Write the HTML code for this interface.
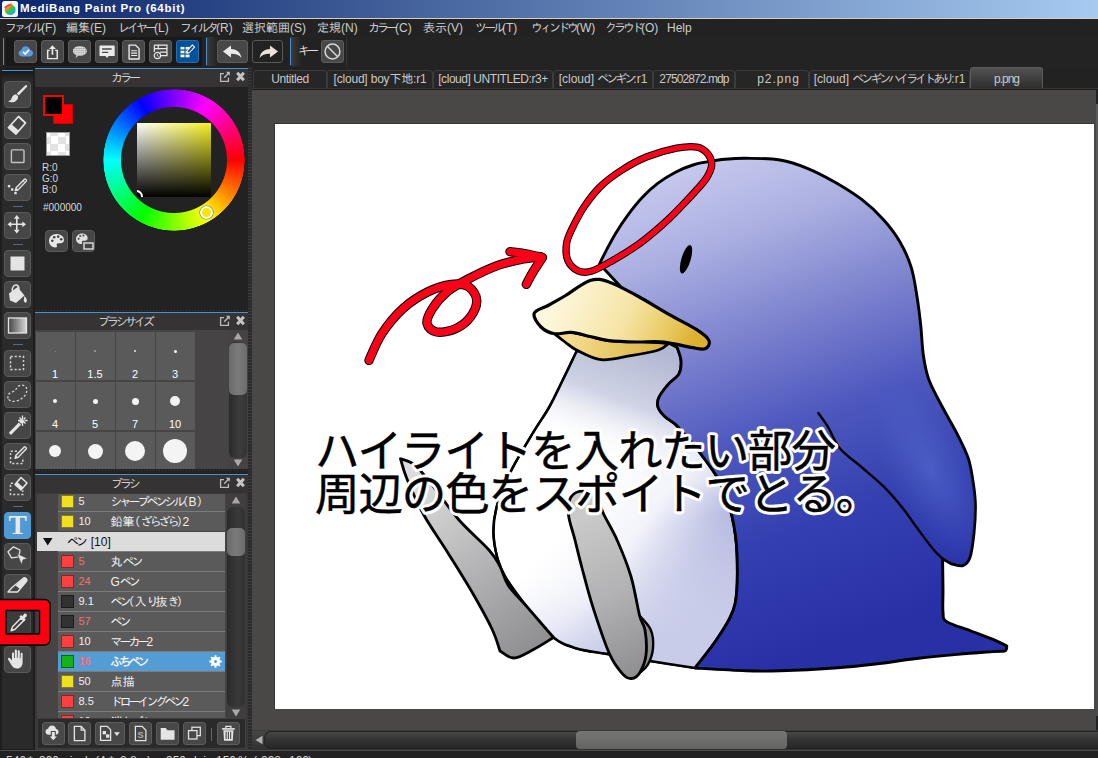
<!DOCTYPE html>
<html lang="ja"><head><meta charset="utf-8"><title>MediBang Paint Pro</title>
<style>
*{box-sizing:border-box;margin:0;padding:0}
html,body{width:1098px;height:758px;overflow:hidden;background:#222}
body{font-family:"Liberation Sans","IPAGothic","Noto Sans CJK JP",sans-serif;font-size:12px;color:#ccc;position:relative}
#app div,#app svg{position:absolute}
.k{letter-spacing:-3px}
.pl{margin-left:-6px}.pr{letter-spacing:-6px}
#app{position:relative;width:1098px;height:758px;overflow:hidden;background:#222}
.t{white-space:nowrap;line-height:1}
.btn{background:#464646;border:1px solid #5a5a5a;border-radius:4px}
.tb{top:40px;height:23px;width:23px;background:#484848;border:1px solid #5c5c5c;border-radius:3px}
.tool{left:4px;width:27px;height:27px;background:#464646;border:1px solid #595959;border-radius:4px}
.tsep{left:13px;width:10px;height:1px;background:#5a6a7a}
.phead{left:35px;width:213px;height:19px;background:#353333;border-top:1px solid #4a90cf}
.phead .t{color:#d0d0d0;font-size:12px;top:3px}
svg{overflow:visible}
.cell{width:38px;height:48px;background:#5a5a5a}
.cell i{background:#f2f2f2;border-radius:50%}
.cell .t{color:#fff;font-size:11px;left:0;width:38px;text-align:center;top:37.500px}
.row{left:20.500px;width:167.500px;height:20px;background:#5a5a5a;border-top:1px solid #7c7c7c}
.row b{left:3px;top:3px;width:13px;height:13px;border:1px solid rgba(0,0,0,.45);font-weight:normal}
.row .n{left:21px;top:4px;font-size:11px;color:#f0f0f0}
.row .m{left:53px;top:4px;font-size:12px;color:#f0f0f0}
.red{color:#ff6b6b !important}
.tab{top:70px;height:18px;background:#262626;border:1px solid #3c3c3c;border-bottom:none;border-radius:3px 3px 0 0;color:#c8c8c8;font-size:12px;text-align:center;line-height:17px;white-space:nowrap;overflow:hidden}
.bb{top:722px;height:23px;width:23px;background:#484848;border:1px solid #5c5c5c;border-radius:3px}
</style></head><body><div id="app">
<!-- title bar -->
<div style="left:0;top:0;width:1098px;height:18px;background:linear-gradient(90deg,#0a246a,#a6caf0)"></div>
<div style="left:0;top:18px;width:1098px;height:1px;background:#d4d0c8"></div>
<svg style="left:2px;top:1px" width="16" height="16" viewBox="0 0 16 16"><rect x="0" y="0" width="16" height="16" rx="2.500" fill="#f6f6f6"/><defs><linearGradient id="lg1" x1=".1" y1="0" x2=".9" y2="1"><stop offset="0" stop-color="#ff2020"/><stop offset=".3" stop-color="#ff8a18"/><stop offset=".55" stop-color="#34c24a"/><stop offset=".8" stop-color="#16b4c8"/><stop offset="1" stop-color="#1a7ae0"/></linearGradient></defs><path d="M9.600 1.800c.2 1.400 1 2 2.300 3.200 1.700 1.600 2.100 3.800 1.300 5.700-.9 2-2.800 3.300-5.100 3.300-3 0-5.300-2.300-5.300-5.200 0-2.400 1.400-4 3.300-4.900 1.500-.7 2.700-1.100 3.500-2.100z" fill="url(#lg1)"/><path d="M3.200 6.500c1.200-1.800 3-2.600 5-2.800" stroke="#ff3a3a" stroke-width="1.600" fill="none" stroke-linecap="round"/></svg>
<div class="t" style="left:20px;top:3px;font-size:11.500px;font-weight:bold;color:#fff;letter-spacing:.73px">MediBang Paint Pro (64bit)</div>
<!-- menu bar -->
<div style="left:0;top:19px;width:1098px;height:18px;background:#222"></div>
<div class="t mn" style="left:5px;top:22px"><span class="k">ファイル</span>(F)</div>
<div class="t mn" style="left:66px;top:22px">編集(E)</div>
<div class="t mn" style="left:118px;top:22px"><span class="k">レイヤー</span>(L)</div>
<div class="t mn" style="left:180px;top:22px"><span class="k">フィルタ</span>(R)</div>
<div class="t mn" style="left:242px;top:22px">選択範囲(S)</div>
<div class="t mn" style="left:317px;top:22px">定規(N)</div>
<div class="t mn" style="left:368px;top:22px"><span class="k">カラー</span>(C)</div>
<div class="t mn" style="left:423px;top:22px">表示(V)</div>
<div class="t mn" style="left:475px;top:22px"><span class="k">ツール</span>(T)</div>
<div class="t mn" style="left:531px;top:22px"><span class="k">ウィンドウ</span>(W)</div>
<div class="t mn" style="left:605px;top:22px"><span class="k">クラウド</span>(O)</div>
<div class="t mn" style="left:667px;top:22px">Help</div>
<!-- toolbar -->
<div style="left:0;top:37px;width:1098px;height:30px;background:#232323"></div>
<div style="left:6px;top:37px;width:196px;height:29px;background:#191919"></div>
<div style="left:3px;top:38px;width:1px;height:27px;background:#4a90cf"></div>
<div style="left:206px;top:37px;width:81px;height:29px;background:linear-gradient(90deg,#3c3c3c,#222 12px)"></div>
<div style="left:206px;top:38px;width:1px;height:27px;background:#4a90cf"></div>
<div style="left:290px;top:37px;width:57px;height:29px;background:linear-gradient(90deg,#3c3c3c,#222 12px);border-right:1px solid #333"></div>
<div style="left:290px;top:38px;width:1px;height:27px;background:#4a90cf"></div>
<div class="tb" style="left:14px"><svg style="left:0;top:0" width="21" height="21" viewBox="0 0 21 21"><g transform="translate(1.3 1.100) scale(.87)"><path d="M6.800 16.500c-2.400 0-4.200-1.700-4.200-3.800 0-1.900 1.400-3.400 3.200-3.700.5-2.500 2.500-4.200 5-4.200 2.600 0 4.600 1.800 5 4.300 1.900.2 3.400 1.700 3.400 3.600 0 2.100-1.700 3.800-3.900 3.800z" fill="#5b9bdc"/><path d="M7.800 11.300l2.400 2.400 4.600-4.900" fill="none" stroke="#fff" stroke-width="1.900"/></g></svg></div>
<div class="tb" style="left:41px"><svg style="left:0;top:0" width="21" height="21" viewBox="0 0 21 21"><g transform="translate(1.3 1.100) scale(.87)"><path d="M7.500 9.500h-2.500v9.500h11v-9.500h-2.500" fill="none" stroke="#eaeaea" stroke-width="1.700"/><path d="M10.500 14.500v-9" stroke="#eaeaea" stroke-width="1.900"/><path d="M6.600 7.800l3.900-4.300 3.900 4.300z" fill="#eaeaea"/></g></svg></div>
<div class="tb" style="left:68px"><svg style="left:0;top:0" width="21" height="21" viewBox="0 0 21 21"><g transform="translate(1.3 1.100) scale(.87)"><defs><pattern id="hx" width="2.400" height="2.400" patternUnits="userSpaceOnUse"><rect width="2.400" height="2.400" fill="#eaeaea"/><path d="M0 .4h2.400M.4 0v2.400" stroke="#9a9a9a" stroke-width=".7"/></pattern></defs><path d="M11 4.500c4.600 0 8 2.500 8 5.600s-3.400 5.600-8 5.600c-.6 0-1.200 0-1.800-.1l-3 2.600.6-3.300c-2.300-1-3.800-2.700-3.800-4.800 0-3.100 3.400-5.600 8-5.600z" fill="url(#hx)"/></g></svg></div>
<div class="tb" style="left:95px"><svg style="left:0;top:0" width="21" height="21" viewBox="0 0 21 21"><g transform="translate(1.3 1.100) scale(.87)"><path d="M3.500 4h15.500a1 1 0 0 1 1 1v10a1 1 0 0 1-1 1h-6l-1.800 2.200-1.800-2.200h-5.900a1 1 0 0 1-1-1v-10a1 1 0 0 1 1-1z" fill="#eaeaea"/><path d="M5.500 8h11M5.500 11.800h7" stroke="#4a4a4a" stroke-width="1.700"/></g></svg></div>
<div class="tb" style="left:122px"><svg style="left:0;top:0" width="21" height="21" viewBox="0 0 21 21"><g transform="translate(1.3 1.100) scale(.87)"><path d="M5.500 3.500h7.500l4 4v12h-11.500z" fill="none" stroke="#eaeaea" stroke-width="1.600" stroke-linejoin="round"/><path d="M7.800 10h7M7.800 12.700h7M7.800 15.400h7" stroke="#eaeaea" stroke-width="1.300"/></g></svg></div>
<div class="tb" style="left:149px"><svg style="left:0;top:0" width="21" height="21" viewBox="0 0 21 21"><g transform="translate(1.3 1.100) scale(.87)"><path d="M3.500 3.500h14.500v12h-7M3.500 3.500v8M3.500 7.500h14.500M8 3.500v5M10 11.500h8" fill="none" stroke="#eaeaea" stroke-width="1.400"/><circle cx="7" cy="15.500" r="3.600" fill="#484848" stroke="#eaeaea" stroke-width="1.400"/><path d="M7 13.500v2.200l1.500 1" fill="none" stroke="#eaeaea" stroke-width="1"/></g></svg></div>
<div class="tb" style="left:176px;background:#00529c;border-color:#2a6cb0"><svg style="left:0;top:0" width="21" height="21" viewBox="0 0 21 21"><g transform="translate(1.3 1.100) scale(.87)"><g fill="#f4efe4"><rect x="2.500" y="5.500" width="4.600" height="3"/><rect x="8.300" y="5.500" width="4.600" height="3"/><rect x="2.500" y="9.900" width="4.600" height="3"/><rect x="8.300" y="9.900" width="4.600" height="3"/><rect x="2.500" y="14.300" width="4.600" height="3.200"/><rect x="8.300" y="14.300" width="4.600" height="3.200"/></g><path d="M16.200 3.300l2.500 2.400-6 6.300-3 .7.700-3z" fill="#00529c" stroke="#f4efe4" stroke-width="1.300" stroke-linejoin="round"/></g></svg></div>
<div class="tb" style="left:217px;width:31px"><svg style="left:0;top:0" width="29" height="21" viewBox="0 0 29 21"><path d="M5 10.500l8-6v3.500c6 .3 9.500 3.500 10.500 9-2.500-3.200-5.500-4.400-10.500-4.300v3.800z" fill="#eaeaea"/></svg></div>
<div class="tb" style="left:252px;width:31px;background:#222;border-color:#585858"><svg style="left:0;top:0" width="29" height="21" viewBox="0 0 29 21"><path d="M25 10.500l-8-6v3.500c-6 .3-9.500 3.500-10.500 9 2.500-3.200 5.500-4.400 10.500-4.300v3.800z" fill="#ebe4d6"/></svg></div>
<div class="t" style="left:298px;top:45px;font-size:12px;color:#ddd;letter-spacing:-2px"><span class="k">キー</span></div>
<div class="tb" style="left:321px"><svg style="left:0;top:0" width="21" height="21" viewBox="0 0 21 21"><circle cx="10.500" cy="10.500" r="7.400" fill="none" stroke="#d8d8d8" stroke-width="1.500"/><path d="M5.300 5.300l10.400 10.400" stroke="#d8d8d8" stroke-width="1.500"/></svg></div>
<!-- tool column -->
<div style="left:0;top:67px;width:35px;height:683px;background:#1e1e1e"></div>
<div style="left:2px;top:70px;width:32px;height:679px;background:#2a2a2a;border-right:1px solid #1c1c1c"></div>
<div style="left:2px;top:70px;width:31px;height:10px;background:linear-gradient(#181818,#2a2a2a);border-top:1px solid #4a90cf"></div>
<div class="tool" style="top:81px"><svg style="left:-1px;top:-1px" width="27" height="27" viewBox="0 0 27 27"><path d="M21.5 4.2c.9-.7 2.200.5 1.500 1.500l-8.300 8.800-1.900-1.900z" fill="#e4e4e4"/><path d="M12 13.300l2 2c.6 2-1 4.600-3.600 5.600-2 .7-4.800.3-6.400-.9 2-.2 3-1 3.600-2.800.6-2 2.200-3.600 4.400-3.900z" fill="#e4e4e4"/></svg></div>
<div class="tool" style="top:112px"><svg style="left:-1px;top:-1px" width="27" height="27" viewBox="0 0 27 27"><path d="M14.500 4.500l7 6.500-9.500 11-7.500-6.500z" fill="none" stroke="#e4e4e4" stroke-width="1.800" stroke-linejoin="round"/><path d="M7.700 12.500l7.300 6.300-3 3.200-7.500-6.500z" fill="#e4e4e4"/></svg></div>
<div class="tool" style="top:143px"><svg style="left:-1px;top:-1px" width="27" height="27" viewBox="0 0 27 27"><rect x="7.400" y="6.900" width="12.600" height="12.600" rx=".8" fill="none" stroke="#c2c2c2" stroke-width="1.400"/></svg></div>
<div class="tool" style="top:174px"><svg style="left:-1px;top:-1px" width="27" height="27" viewBox="0 0 27 27"><path d="M20.400 5.200c.8-.8 2.800 1 2 1.900l-8.200 8.800-3 .9.900-3z" fill="#5a5a5a" stroke="#e4e4e4" stroke-width="1.300" stroke-linejoin="round"/><path d="M19 6.800l2 1.900" stroke="#e4e4e4" stroke-width="1"/><path d="M11.200 16.800l.9-3 2.100 2.100z" fill="#e4e4e4"/><rect x="3.600" y="10.800" width="3" height="3" fill="#e4e4e4" stroke="#333" stroke-width=".5"/><rect x="6.800" y="14" width="3" height="3" fill="#e4e4e4" stroke="#333" stroke-width=".5"/><rect x="10" y="17.600" width="3" height="3" fill="#e4e4e4" stroke="#333" stroke-width=".5"/></svg></div>
<div class="tool" style="top:212px"><svg style="left:-1px;top:-1px" width="27" height="27" viewBox="0 0 27 27"><g transform="translate(.9 .4) scale(.88)"><path d="M13.500 3l3.300 4.200h-2.400v5.400h5.400v-2.400l4.200 3.300-4.200 3.300v-2.400h-5.400v5.400h2.400l-3.300 4.200-3.300-4.200h2.400v-5.400h-5.400v2.400l-4.200-3.300 4.200-3.300v2.400h5.400v-5.400h-2.400z" fill="#e4e4e4"/></g></svg></div>
<div class="tool" style="top:250px"><svg style="left:-1px;top:-1px" width="27" height="27" viewBox="0 0 27 27"><rect x="6.500" y="6.500" width="14" height="14" fill="#e4e4e4"/></svg></div>
<div class="tool" style="top:281px"><svg style="left:-1px;top:-1px" width="27" height="27" viewBox="0 0 27 27"><path d="M5 12.500l8.500-6.500 7 8.500-8.500 7.500-6-2.500z" fill="#e4e4e4"/><path d="M8.500 10.500c-1-4 1.500-7 4-6.500 1.800.4 2.500 2.500 2.500 4.500" fill="none" stroke="#e4e4e4" stroke-width="1.500"/><path d="M20.500 15c1.500 1.500 2.800 3.500 2.300 5.500-.4 1.500-2.300 1.500-2.800 0-.5-1.700 0-3.500.5-5.500z" fill="#e4e4e4"/></svg></div>
<div class="tool" style="top:312px"><svg style="left:-1px;top:-1px" width="27" height="27" viewBox="0 0 27 27"><defs><linearGradient id="gt" x1="0" y1="0" x2="1" y2="0"><stop offset="0" stop-color="#444"/><stop offset="1" stop-color="#d8d8d8"/></linearGradient></defs><rect x="4.500" y="6" width="18" height="15" fill="url(#gt)" stroke="#e4e4e4" stroke-width="1.300"/></svg></div>
<div class="tool" style="top:350px"><svg style="left:-1px;top:-1px" width="27" height="27" viewBox="0 0 27 27"><rect x="6.500" y="6.500" width="13" height="13" fill="none" stroke="#d0d0d0" stroke-width="1.500" stroke-dasharray="2.200 1.900"/></svg></div>
<div class="tool" style="top:381px"><svg style="left:-1px;top:-1px" width="27" height="27" viewBox="0 0 27 27"><path d="M4.200 17.500c-1.300-3 .8-5.600 4-6.600 3-.9 3.800-2.500 5.500-4.800 1.600-2.200 5.200-2.700 7.400-.9 2.300 1.900 2.100 5.300.6 8-1.700 3-5.200 5.600-9.300 6.800-3.600 1-7 .2-8.200-2.500z" fill="none" stroke="#d0d0d0" stroke-width="1.300" stroke-dasharray="2.300 1.900"/></svg></div>
<div class="tool" style="top:412px"><svg style="left:-1px;top:-1px" width="27" height="27" viewBox="0 0 27 27"><path d="M4.800 20.800l10-10.200 2.200 2.100-10 10.200z" fill="#e4e4e4"/><circle cx="17.800" cy="9.200" r="2.300" fill="#e4e4e4"/><path d="M18.500 3.500v3.500M18.500 11v3M14 8.500h3M20.500 8.500h3M15.500 5.500l1.800 1.800M21.500 5.500l-1.800 1.800M21.500 11.500l-1.800-1.800" stroke="#e4e4e4" stroke-width="1.300" fill="none"/></svg></div>
<div class="tool" style="top:443px"><svg style="left:-1px;top:-1px" width="27" height="27" viewBox="0 0 27 27"><path d="M13 8.200h-6.500v12.300h12.300v-6" fill="none" stroke="#d0d0d0" stroke-width="1.500" stroke-dasharray="2.200 1.900"/><path d="M20.200 4c.8-.8 2.900 1.100 2 2l-8 8.400-3.200 1 .9-3.200z" fill="#5a5a5a" stroke="#e4e4e4" stroke-width="1.300" stroke-linejoin="round"/><path d="M11 15.300l.9-3 2.200 2.100z" fill="#e4e4e4"/></svg></div>
<div class="tool" style="top:474px"><svg style="left:-1px;top:-1px" width="27" height="27" viewBox="0 0 27 27"><path d="M9 9.200h-2.500v11.300h12.300v-4" fill="none" stroke="#d0d0d0" stroke-width="1.500" stroke-dasharray="2.200 1.900"/><path d="M17 3.500l6 5.500-6 7-6-5.500z" fill="none" stroke="#e4e4e4" stroke-width="1.600" stroke-linejoin="round"/><path d="M13.300 8l6 5.500-2.300 2.500-6-5.500z" fill="#e4e4e4"/></svg></div>
<div class="tool" style="top:512px;background:#4e9ad4;border-color:#4e9ad4"><svg style="left:-1px;top:-1px" width="27" height="27" viewBox="0 0 27 27"><text x="13.600" y="22.300" font-family="Liberation Serif,serif" font-size="27.500" font-weight="bold" text-anchor="middle" fill="#ece9e2">T</text></svg></div>
<div class="tool" style="top:543px"><svg style="left:-1px;top:-1px" width="27" height="27" viewBox="0 0 27 27"><path d="M9.500 3.800l6.500 3.200-1 6.800-7.500 1-3.500-6z" fill="none" stroke="#e4e4e4" stroke-width="1.300" stroke-linejoin="round"/><path d="M13 10.500l10.500 5-4.500 1.300-1.500 4.700z" fill="#e4e4e4" stroke="#464646" stroke-width=".6"/></svg></div>
<div class="tool" style="top:574px"><svg style="left:-1px;top:-1px" width="27" height="27" viewBox="0 0 27 27"><path d="M19 4.500c2-1.800 5 .8 3.400 3l-8.900 10.500h-9.500l4-4.500z" fill="none" stroke="#e4e4e4" stroke-width="1.400" stroke-linejoin="round"/><path d="M19 4.500c2-1.800 5 .8 3.400 3l-6.400 7.500-4.500-3.500z" fill="#e4e4e4"/></svg></div>
<div class="tool" style="top:646px"><svg style="left:-1px;top:-1px" width="27" height="27" viewBox="0 0 27 27"><path d="M8 14.500v-7c0-1.300 2-1.300 2 0v4.500h.8v-7.500c0-1.400 2.100-1.400 2.100 0v7.300h.8v-6.500c0-1.400 2.100-1.400 2.100 0v7h.8v-4.500c0-1.300 2-1.300 2 0v8.200c0 4-2 6.500-5.500 6.500-3 0-4.500-1.500-6-4l-3-5c-.8-1.400 1-2.400 2-1.200z" fill="#e4e4e4"/></svg></div>
<div class="tsep" style="top:206px"></div>
<div class="tsep" style="top:244px"></div>
<div class="tsep" style="top:344px"></div>
<div class="tsep" style="top:506px"></div>
<!-- panels background -->
<div style="left:35px;top:67px;width:213px;height:683px;background:#222"></div>
<div style="left:248px;top:67px;width:4px;height:683px;background:#242424;background-image:radial-gradient(#383838 0.7px,transparent 0.9px);background-size:2px 3px"></div>
<!-- color panel -->
<div class="phead" style="top:68px"><div class="t" style="left:76px"><span class="k">カラー</span></div>
<svg style="left:184px;top:1.500px" width="28" height="12" viewBox="0 0 28 12"><path d="M5 2.600h-3.400v7.800h7.800v-3.600" fill="none" stroke="#bcbcbc" stroke-width="1.300"/><path d="M5.200 6.800l4.800-5" fill="none" stroke="#bcbcbc" stroke-width="1.400"/><path d="M6.800 .8h4v4z" fill="#bcbcbc"/><path d="M18.200 1.700l6.600 7.600M24.800 1.700l-6.600 7.600" stroke="#c4c4c4" stroke-width="3" fill="none"/></svg></div>
<div style="left:53px;top:104px;width:20px;height:20px;background:#fb0007;border:1px solid #c00"></div>
<div style="left:43px;top:95px;width:21px;height:21px;background:#000;border:2px solid #f00"></div>
<div style="left:46px;top:132px;width:24px;height:24px;background:#fff;border:1px solid #999;background-image:conic-gradient(#e2e2e2 25%,#fff 0 50%,#e2e2e2 0 75%,#fff 0);background-size:15px 15px;background-position:-4px -4px"></div>
<div class="t" style="left:42px;top:163px;font-size:10px;color:#d8d8d8">R:0</div>
<div class="t" style="left:42px;top:174px;font-size:10px;color:#d8d8d8">G:0</div>
<div class="t" style="left:42px;top:185px;font-size:10px;color:#d8d8d8">B:0</div>
<div class="t" style="left:43px;top:203px;font-size:10px;color:#d8d8d8">#000000</div>
<div class="btn" style="left:45px;top:230px;width:23px;height:22px"><svg style="left:2px;top:2px" width="17" height="16" viewBox="0 0 17 16"><path d="M8.500 1C4 1 1 4.200 1 8c0 3.600 3 6.500 6.500 6.500 1.600 0 1.800-1.200 1.300-2-.6-1.200.2-2.300 1.500-2.300h2.200c2 0 3.500-1.300 3.500-3.200C16 3.500 12.600 1 8.500 1z" fill="#e8e8e8"/><circle cx="4.300" cy="7.800" r="1.300" fill="#444"/><circle cx="6.200" cy="4.300" r="1.300" fill="#444"/><circle cx="10.200" cy="3.600" r="1.300" fill="#444"/><circle cx="13.200" cy="6.300" r="1.300" fill="#444"/></svg></div>
<div class="btn" style="left:72px;top:230px;width:23px;height:22px"><svg style="left:2px;top:1px" width="19" height="19" viewBox="0 0 19 19"><path d="M7 1.500C3.500 1.500 1 4 1 7c0 2.800 2.300 5 5 5 1.200 0 1.400-.9 1-1.600-.4-.9.200-1.700 1.200-1.700h1.800c1.500 0 2.700-1 2.700-2.500 0-2.800-2.600-4.700-5.700-4.700z" fill="#e0e0e0"/><circle cx="3.600" cy="6.800" r="1" fill="#444"/><circle cx="5.200" cy="4" r="1" fill="#444"/><circle cx="8.400" cy="3.500" r="1" fill="#444"/><rect x="9" y="11" width="9" height="6" fill="#444" stroke="#e0e0e0" stroke-width="1.400"/></svg></div>
<!-- wheel -->
<div style="left:103px;top:89px;width:142px;height:142px;border-radius:50%;background:conic-gradient(from 90deg,#ff0000,#ffff00,#00ff00,#00ffff,#0000ff,#ff00ff,#ff0000);-webkit-mask:radial-gradient(circle closest-side,transparent 52.500px,#000 53.500px,#000 70.300px,transparent 71px);mask:radial-gradient(circle closest-side,transparent 52.500px,#000 53.500px,#000 70.300px,transparent 71px)"></div>
<div style="left:137px;top:123px;width:74px;height:74px;background:linear-gradient(to bottom,rgba(0,0,0,0),#000),linear-gradient(to right,#fff,#f4f020);overflow:hidden"><div style="left:-7px;top:67px;width:13px;height:13px;border-radius:50%;border:2.500px solid #fff"></div></div>
<div style="left:200.400px;top:205.500px;width:13px;height:13px;border-radius:50%;background:#f8e800;border:2px solid #fff;box-shadow:0 0 0 .6px #777"></div>
<!-- splitter dots -->
<div style="left:35px;top:309px;width:213px;height:3px;background:#222;background-image:radial-gradient(#3c3c3c 0.8px,transparent 1px);background-size:3px 3px"></div>
<!-- brush size panel -->
<div class="phead" style="top:312px"><div class="t" style="left:63px"><span class="k">ブラシサイズ</span></div>
<svg style="left:184px;top:1.500px" width="28" height="12" viewBox="0 0 28 12"><path d="M5 2.600h-3.400v7.800h7.800v-3.600" fill="none" stroke="#bcbcbc" stroke-width="1.300"/><path d="M5.200 6.800l4.800-5" fill="none" stroke="#bcbcbc" stroke-width="1.400"/><path d="M6.800 .8h4v4z" fill="#bcbcbc"/><path d="M18.200 1.700l6.600 7.600M24.800 1.700l-6.600 7.600" stroke="#c4c4c4" stroke-width="3" fill="none"/></svg></div>
<div style="left:35px;top:330px;width:193px;height:139px;background:#464444;overflow:hidden">
<div class="cell" style="left:1px;top:1.5px;width:38.500px;height:48.500px"><i style="position:absolute;left:18.70px;top:19.00px;width:1px;height:1px;background:#8a8a8a"></i><div class="t">1</div></div>
<div class="cell" style="left:41px;top:1.5px;width:38.500px;height:48.500px"><i style="position:absolute;left:18.45px;top:18.75px;width:1.5px;height:1.5px;background:#9a9a9a"></i><div class="t">1.5</div></div>
<div class="cell" style="left:81px;top:1.5px;width:38.500px;height:48.500px"><i style="position:absolute;left:18.20px;top:18.50px;width:2px;height:2px;background:#e8e8e8"></i><div class="t">2</div></div>
<div class="cell" style="left:121px;top:1.5px;width:38.500px;height:48.500px"><i style="position:absolute;left:17.70px;top:18.00px;width:3px;height:3px;background:#f4f4f4"></i><div class="t">3</div></div>
<div class="cell" style="left:1px;top:51.5px;width:38.500px;height:48.500px"><i style="position:absolute;left:17.10px;top:17.40px;width:4.2px;height:4.2px;background:#f4f4f4"></i><div class="t">4</div></div>
<div class="cell" style="left:41px;top:51.5px;width:38.500px;height:48.500px"><i style="position:absolute;left:16.70px;top:17.00px;width:5px;height:5px;background:#f4f4f4"></i><div class="t">5</div></div>
<div class="cell" style="left:81px;top:51.5px;width:38.500px;height:48.500px"><i style="position:absolute;left:15.70px;top:16.00px;width:7px;height:7px;background:#f4f4f4"></i><div class="t">7</div></div>
<div class="cell" style="left:121px;top:51.5px;width:38.500px;height:48.500px"><i style="position:absolute;left:14.10px;top:14.40px;width:10.2px;height:10.2px;background:#f4f4f4"></i><div class="t">10</div></div>
<div class="cell" style="left:1px;top:101.5px;width:38.500px;height:48.500px"><i style="position:absolute;left:12.90px;top:13.20px;width:12.6px;height:12.6px;background:#f4f4f4"></i><div class="t">12</div></div>
<div class="cell" style="left:41px;top:101.5px;width:38.500px;height:48.500px"><i style="position:absolute;left:11.70px;top:12.00px;width:15px;height:15px;background:#f4f4f4"></i><div class="t">15</div></div>
<div class="cell" style="left:81px;top:101.5px;width:38.500px;height:48.500px"><i style="position:absolute;left:9.05px;top:9.35px;width:20.3px;height:20.3px;background:#f4f4f4"></i><div class="t">20</div></div>
<div class="cell" style="left:121px;top:101.5px;width:38.500px;height:48.500px"><i style="position:absolute;left:7.00px;top:7.30px;width:24.4px;height:24.4px;background:#f4f4f4"></i><div class="t">25</div></div>
</div>
<div style="left:228px;top:330px;width:20px;height:139px;background:#444242"></div>
<div style="left:229px;top:342px;width:18px;height:116px;border-radius:6px;background:linear-gradient(90deg,#2a2a2a,#3c3c3c 60%,#333)"></div>
<div style="left:229px;top:343px;width:18px;height:52px;border-radius:5px;background:linear-gradient(90deg,#6a6a6a,#7a7a7a 50%,#6c6c6c)"></div>
<svg style="left:228px;top:330px" width="20" height="139" viewBox="0 0 20 139"><path d="M10 2.500l4.300 7h-8.600z" fill="#a8a8a8"/><path d="M10 136.500l4.300-7h-8.600z" fill="#a8a8a8"/></svg>
<div style="left:35px;top:469px;width:213px;height:4px;background:#222;background-image:radial-gradient(#3c3c3c 0.8px,transparent 1px);background-size:3px 3px"></div>
<!-- brush panel -->
<div class="phead" style="top:474px"><div class="t" style="left:76px"><span class="k">ブラシ</span></div>
<svg style="left:184px;top:1.500px" width="28" height="12" viewBox="0 0 28 12"><path d="M5 2.600h-3.400v7.800h7.800v-3.600" fill="none" stroke="#bcbcbc" stroke-width="1.300"/><path d="M5.200 6.800l4.800-5" fill="none" stroke="#bcbcbc" stroke-width="1.400"/><path d="M6.800 .8h4v4z" fill="#bcbcbc"/><path d="M18.200 1.700l6.600 7.600M24.800 1.700l-6.600 7.600" stroke="#c4c4c4" stroke-width="3" fill="none"/></svg></div>
<div style="left:35px;top:493px;width:213px;height:257px;background:#3a3838"></div>
<div style="left:37px;top:494px;width:189px;height:224px;background:#464444;overflow:hidden">
<div class="row" style="top:-3px"><b style="position:absolute;background:#f0e020"></b><div class="t n" style="">5</div><div class="t m" style=""><span class="k">シャープペンシル</span><span class="pl">（</span>B<span class="pr">）</span></div></div>
<div class="row" style="top:17px"><b style="position:absolute;background:#f0e020"></b><div class="t n" style="">10</div><div class="t m" style="">鉛筆<span class="pl">（</span><span class="k">ざらざら</span><span class="pr">）</span>2</div></div>
<div style="left:0;top:38px;width:188px;height:19px;background:#dcdcdc"><svg style="left:6px;top:6px" width="10" height="8" viewBox="0 0 10 8"><path d="M0 0h9.500l-4.750 7.500z" fill="#111"/></svg><div class="t" style="left:30px;top:4px;color:#111;font-size:12px"><span class="k">ペン</span>&nbsp;&#8201;[10]</div></div>
<div class="row" style="top:57px"><b style="position:absolute;background:#ff4040"></b><div class="t n red" style="">5</div><div class="t m" style="">丸<span class="k">ペン</span></div></div>
<div class="row" style="top:77px"><b style="position:absolute;background:#ff4040"></b><div class="t n red" style="">24</div><div class="t m" style="">G<span class="k">ペン</span></div></div>
<div class="row" style="top:97px"><b style="position:absolute;background:#323232"></b><div class="t n" style="">9.1</div><div class="t m" style=""><span class="k">ペン</span><span class="pl">（</span>入<span class="k">り</span>抜<span class="k">き</span><span class="pr">）</span></div></div>
<div class="row" style="top:117px"><b style="position:absolute;background:#323232"></b><div class="t n red" style="">57</div><div class="t m" style=""><span class="k">ペン</span></div></div>
<div class="row" style="top:137px"><b style="position:absolute;background:#ff4040"></b><div class="t n" style="">10</div><div class="t m" style=""><span class="k">マーカー</span>2</div></div>
<div class="row" style="top:157px;background:#549cd4"><b style="position:absolute;background:#14b414"></b><div class="t n red" style="font-weight:bold">16</div><div class="t m" style="font-weight:bold"><span class="k">ふちペン</span></div><svg style="left:151px;top:3px" width="13" height="13" viewBox="0 0 13 13"><circle cx="6.500" cy="6.500" r="3.600" fill="none" stroke="#fff" stroke-width="2.200"/><path d="M6.500 .3v12.400M.3 6.500h12.400M2.100 2.100l8.800 8.800M10.900 2.100l-8.800 8.800" stroke="#fff" stroke-width="1.800"/><circle cx="6.500" cy="6.500" r="1.500" fill="#549cd4"/></svg></div>
<div class="row" style="top:177px"><b style="position:absolute;background:#f0e020"></b><div class="t n" style="">50</div><div class="t m" style="">点描</div></div>
<div class="row" style="top:197px"><b style="position:absolute;background:#ff4040"></b><div class="t n" style="">8.5</div><div class="t m" style=""><span class="k">ドローイングペン</span>2</div></div>
<div class="row" style="top:217px"><b style="position:absolute;background:#ff4040"></b><div class="t n" style="">10</div><div class="t m" style="">消<span class="k">しゴム</span></div></div>
</div>
<div style="left:226px;top:494px;width:20px;height:224px;background:#403e3e"></div>
<div style="left:227px;top:507px;width:18px;height:200px;border-radius:6px;background:linear-gradient(90deg,#2a2a2a,#3a3a3a 60%,#303030)"></div>
<div style="left:227px;top:528px;width:18px;height:28px;border-radius:5px;background:linear-gradient(90deg,#6a6a6a,#7a7a7a 50%,#6c6c6c)"></div>
<svg style="left:226px;top:494px" width="20" height="224" viewBox="0 0 20 224"><path d="M10 2.500l4.300 7h-8.600z" fill="#a8a8a8"/><path d="M10 222.500l4.300-7h-8.600z" fill="#a8a8a8"/></svg>
<div style="left:37px;top:718px;width:209px;height:31px;background:#2a2a2a;border:1px solid #3e3e3e"></div>
<div class="bb" style="left:42px;width:23px"><svg style="left:0;top:0" width="21" height="21" viewBox="0 0 21 21"><path d="M5.800 11.800c-1.900 0-3.300-1.300-3.300-3 0-1.600 1.100-2.800 2.600-3 .4-1.900 1.900-3.200 3.900-3.200 2.100 0 3.700 1.400 4 3.300 1.500.2 2.600 1.400 2.600 2.900 0 1.700-1.300 3-3.100 3z" fill="#e4e4e4"/><path d="M8.300 8.500h4v4.500h2.600l-4.600 5-4.600-5h2.600z" fill="#e4e4e4" stroke="#484848" stroke-width="1.100" stroke-linejoin="round"/></svg></div>
<div class="bb" style="left:68px;width:23px"><svg style="left:0;top:0" width="21" height="21" viewBox="0 0 21 21"><g transform="translate(1.6 1.300) scale(.84)"><path d="M4.500 2.500h8l4.500 4.500v12.500h-12.500z" fill="none" stroke="#e4e4e4" stroke-width="1.600"/><path d="M12.500 2.500v4.500h4.500" fill="none" stroke="#e4e4e4" stroke-width="1.400"/></g></svg></div>
<div class="bb" style="left:95px;width:30px"><svg style="left:0;top:0" width="28" height="21" viewBox="0 0 28 21"><g transform="translate(1.6 1.300) scale(.84)"><path d="M3.500 2.500h8l4 4v12.500h-12z" fill="none" stroke="#e4e4e4" stroke-width="1.500"/><rect x="6" y="8" width="4" height="4" fill="#e4e4e4"/><rect x="10" y="12" width="4" height="4" fill="#e4e4e4"/><path d="M19.500 9.500h7l-3.500 4.500z" fill="#e4e4e4"/></g></svg></div>
<div class="bb" style="left:129px;width:23px"><svg style="left:0;top:0" width="21" height="21" viewBox="0 0 21 21"><g transform="translate(1.6 1.300) scale(.84)"><path d="M4.500 2.500h8l4.500 4.500v12.500h-12.500z" fill="none" stroke="#e4e4e4" stroke-width="1.500"/><text x="10.600" y="16.500" font-size="11" font-weight="bold" text-anchor="middle" fill="#b0b0b0" font-family="Liberation Sans,sans-serif">S</text></g></svg></div>
<div class="bb" style="left:156px;width:23px"><svg style="left:0;top:0" width="21" height="21" viewBox="0 0 21 21"><g transform="translate(1.6 1.300) scale(.84)"><path d="M2.500 4.500h6l2 2.500h8.500v11.500h-16.500z" fill="#e4e4e4"/></g></svg></div>
<div class="bb" style="left:183px;width:23px"><svg style="left:0;top:0" width="21" height="21" viewBox="0 0 21 21"><g transform="translate(1.6 1.300) scale(.84)"><rect x="7.500" y="3.500" width="10" height="10" fill="none" stroke="#e4e4e4" stroke-width="1.500"/><rect x="3.500" y="7.500" width="10" height="10" fill="#484848" stroke="#e4e4e4" stroke-width="1.500"/></g></svg></div>
<div class="bb" style="left:217px;width:23px"><svg style="left:0;top:0" width="21" height="21" viewBox="0 0 21 21"><g transform="translate(1.6 1.300) scale(.84)"><path d="M3 5.500h15" stroke="#e4e4e4" stroke-width="2"/><path d="M7.500 4.500v-2h6v2" fill="none" stroke="#e4e4e4" stroke-width="1.500"/><path d="M4.500 7h12l-.8 12.500h-10.400z" fill="#e4e4e4"/><path d="M7.800 9v8.500M10.500 9v8.500M13.200 9v8.500" stroke="#484848" stroke-width="1.300"/></g></svg></div>
<div style="left:211px;top:728px;width:1px;height:13px;background:#5a6a7a"></div>
<!-- document area -->
<div style="left:252px;top:67px;width:846px;height:23px;background:#222"></div>
<div class="tab" style="left:253px;width:74px"><span style="letter-spacing:-0.37px">Untitled</span></div>
<div class="tab" style="left:327px;width:106px"><span style="letter-spacing:-0.19px">[cloud] boy下地:r1</span></div>
<div class="tab" style="left:433px;width:120px"><span style="letter-spacing:-0.44px">[cloud] UNTITLED:r3+</span></div>
<div class="tab" style="left:553px;width:100px"><span style="letter-spacing:0px">[cloud] <span class="k">ペンギン</span>:r1</span></div>
<div class="tab" style="left:653px;width:82px"><span style="letter-spacing:-0.9px">27502872.mdp</span></div>
<div class="tab" style="left:735px;width:74px"><span style="letter-spacing:1px">&nbsp;&nbsp;&nbsp;p2.png</span></div>
<div class="tab" style="left:809px;width:161px"><span style="letter-spacing:0px">[cloud] <span class="k">ペンギンハイライトあり</span>:r1</span></div>
<div class="tab" style="left:970px;width:73px;top:67px;height:22px;line-height:23px;background:linear-gradient(#525252,#2c2c2c);border-color:#5a5a5a"><span style="letter-spacing:-1px">p.png</span></div>
<div style="left:252px;top:88px;width:846px;height:2px;background:linear-gradient(#383838 50%,#1a1a1a 50%)"></div>
<svg style="left:0;top:0" width="1098" height="758" viewBox="0 0 1098 758">
<defs>
<clipPath id="cv"><rect x="275" y="124" width="819" height="585"/></clipPath>
<linearGradient id="gb" gradientUnits="userSpaceOnUse" x1="672" y1="168" x2="842" y2="640"><stop offset="0" stop-color="#c6caee"/><stop offset=".16" stop-color="#adb1e2"/><stop offset=".36" stop-color="#7d83ce"/><stop offset=".56" stop-color="#4d58be"/><stop offset=".76" stop-color="#3440b0"/><stop offset="1" stop-color="#2830a6"/></linearGradient>
<linearGradient id="gw" gradientUnits="userSpaceOnUse" x1="585" y1="500" x2="745" y2="625"><stop offset="0" stop-color="#fff"/><stop offset=".3" stop-color="#f3f4fb"/><stop offset=".6" stop-color="#b4b9e0"/><stop offset="1" stop-color="#7c82c6"/></linearGradient>
<linearGradient id="gw2" gradientUnits="userSpaceOnUse" x1="640" y1="345" x2="600" y2="455"><stop offset="0" stop-color="#b2b8d2"/><stop offset=".5" stop-color="#cfd3e5"/><stop offset="1" stop-color="#fff" stop-opacity="0"/></linearGradient>
<linearGradient id="gw3" gradientUnits="userSpaceOnUse" x1="560" y1="560" x2="590" y2="660"><stop offset="0" stop-color="#fff" stop-opacity="0"/><stop offset="1" stop-color="#c9cce8"/></linearGradient>
<linearGradient id="gk" gradientUnits="userSpaceOnUse" x1="560" y1="290" x2="690" y2="350"><stop offset="0" stop-color="#fdf7dc"/><stop offset=".5" stop-color="#f6e4a6"/><stop offset=".8" stop-color="#e9ca60"/><stop offset="1" stop-color="#dcb030"/></linearGradient>
<linearGradient id="gk2" gradientUnits="userSpaceOnUse" x1="570" y1="335" x2="660" y2="355"><stop offset="0" stop-color="#f4dc90"/><stop offset="1" stop-color="#dcb440"/></linearGradient>
<linearGradient id="gs" gradientUnits="userSpaceOnUse" x1="600" y1="350" x2="590" y2="440"><stop offset="0" stop-color="#c2c7d8"/><stop offset="1" stop-color="#eceef6" stop-opacity="0"/></linearGradient>
<linearGradient id="gf" gradientUnits="userSpaceOnUse" x1="420" y1="480" x2="540" y2="650"><stop offset="0" stop-color="#dcdcdc"/><stop offset=".5" stop-color="#b4b4b6"/><stop offset="1" stop-color="#8e8e90"/></linearGradient>
<linearGradient id="gf2" gradientUnits="userSpaceOnUse" x1="575" y1="520" x2="650" y2="670"><stop offset="0" stop-color="#cacaca"/><stop offset=".5" stop-color="#b2b2b4"/><stop offset="1" stop-color="#8e8e90"/></linearGradient>
<radialGradient id="gwg" gradientUnits="userSpaceOnUse" cx="930" cy="468" r="88" gradientTransform="translate(930 468) rotate(-28) scale(.5 1.25) translate(-930 -468)"><stop offset="0" stop-color="#586ed2" stop-opacity=".6"/><stop offset=".55" stop-color="#5066cc" stop-opacity=".3"/><stop offset="1" stop-color="#4458c4" stop-opacity="0"/></radialGradient>
</defs>
<rect x="252" y="90" width="844" height="640" fill="#4a4846"/>
<rect x="274" y="123" width="820" height="586" fill="#383634"/>
<rect x="275" y="124" width="819" height="585" fill="#fff"/>
<g clip-path="url(#cv)" stroke-linejoin="round" stroke-linecap="round">
<path d="M576.5 351.5C574.2 356.2 567.4 370.7 562.8 380.0C558.2 389.3 554.0 398.7 549.0 407.5C544.0 416.3 539.3 422.2 533.0 432.8C526.7 443.4 516.9 459.2 511.0 471.0C505.1 482.8 500.4 493.8 497.5 503.8C494.6 513.8 493.4 521.9 493.4 531.0C493.4 540.1 495.4 550.7 497.5 558.5C499.6 566.3 500.8 569.5 505.7 577.6C510.6 585.7 519.0 597.0 527.0 607.0C535.0 617.0 545.2 630.6 553.5 637.5C561.8 644.4 567.8 645.7 576.7 648.4C585.6 651.1 594.6 651.8 606.8 653.9C619.0 656.0 635.3 658.6 650.0 661.0C664.7 663.4 687.5 666.8 695.0 668.0C698.9 662.8 711.9 647.3 718.6 636.6C725.3 625.9 731.9 617.7 735.0 604.0C738.1 590.3 737.5 569.2 737.0 554.6C736.5 540.0 734.8 528.5 732.0 516.4C729.2 504.3 725.9 493.3 720.0 482.0C714.1 470.7 702.7 456.5 696.7 448.5C690.7 440.5 687.5 438.0 684.0 434.0C680.5 430.0 678.7 427.4 675.4 424.4C672.1 421.4 667.2 418.9 664.3 416.0C661.4 413.1 658.8 409.9 657.9 406.8C657.0 403.7 657.1 401.3 658.8 397.6C660.5 393.9 664.6 388.6 668.0 384.6C671.4 380.6 676.9 377.6 679.1 373.6C681.3 369.6 681.3 364.9 681.0 360.6C680.7 356.3 677.9 349.9 677.3 347.7C673.6 345.8 658.7 337.9 655.0 336.0C641.9 338.6 589.6 348.9 576.5 351.5Z" fill="url(#gw)" stroke="#000" stroke-width="2.200"/>
<path d="M576.5 351.5C574.2 356.2 567.4 370.7 562.8 380.0C558.2 389.3 554.0 398.7 549.0 407.5C544.0 416.3 539.3 422.2 533.0 432.8C526.7 443.4 516.9 459.2 511.0 471.0C505.1 482.8 500.4 493.8 497.5 503.8C494.6 513.8 493.4 521.9 493.4 531.0C493.4 540.1 495.4 550.7 497.5 558.5C499.6 566.3 500.8 569.5 505.7 577.6C510.6 585.7 519.0 597.0 527.0 607.0C535.0 617.0 545.2 630.6 553.5 637.5C561.8 644.4 567.8 645.7 576.7 648.4C585.6 651.1 594.6 651.8 606.8 653.9C619.0 656.0 635.3 658.6 650.0 661.0C664.7 663.4 687.5 666.8 695.0 668.0C698.9 662.8 711.9 647.3 718.6 636.6C725.3 625.9 731.9 617.7 735.0 604.0C738.1 590.3 737.5 569.2 737.0 554.6C736.5 540.0 734.8 528.5 732.0 516.4C729.2 504.3 725.9 493.3 720.0 482.0C714.1 470.7 702.7 456.5 696.7 448.5C690.7 440.5 687.5 438.0 684.0 434.0C680.5 430.0 678.7 427.4 675.4 424.4C672.1 421.4 667.2 418.9 664.3 416.0C661.4 413.1 658.8 409.9 657.9 406.8C657.0 403.7 657.1 401.3 658.8 397.6C660.5 393.9 664.6 388.6 668.0 384.6C671.4 380.6 676.9 377.6 679.1 373.6C681.3 369.6 681.3 364.9 681.0 360.6C680.7 356.3 677.9 349.9 677.3 347.7C673.6 345.8 658.7 337.9 655.0 336.0C641.9 338.6 589.6 348.9 576.5 351.5Z" fill="url(#gw3)"/>
<path d="M576.5 351.5C574.2 356.2 567.4 370.7 562.8 380.0C558.2 389.3 554.0 398.7 549.0 407.5C544.0 416.3 539.3 422.2 533.0 432.8C526.7 443.4 516.9 459.2 511.0 471.0C505.1 482.8 500.4 493.8 497.5 503.8C494.6 513.8 493.4 521.9 493.4 531.0C493.4 540.1 495.4 550.7 497.5 558.5C499.6 566.3 500.8 569.5 505.7 577.6C510.6 585.7 519.0 597.0 527.0 607.0C535.0 617.0 545.2 630.6 553.5 637.5C561.8 644.4 567.8 645.7 576.7 648.4C585.6 651.1 594.6 651.8 606.8 653.9C619.0 656.0 635.3 658.6 650.0 661.0C664.7 663.4 687.5 666.8 695.0 668.0C698.9 662.8 711.9 647.3 718.6 636.6C725.3 625.9 731.9 617.7 735.0 604.0C738.1 590.3 737.5 569.2 737.0 554.6C736.5 540.0 734.8 528.5 732.0 516.4C729.2 504.3 725.9 493.3 720.0 482.0C714.1 470.7 702.7 456.5 696.7 448.5C690.7 440.5 687.5 438.0 684.0 434.0C680.5 430.0 678.7 427.4 675.4 424.4C672.1 421.4 667.2 418.9 664.3 416.0C661.4 413.1 658.8 409.9 657.9 406.8C657.0 403.7 657.1 401.3 658.8 397.6C660.5 393.9 664.6 388.6 668.0 384.6C671.4 380.6 676.9 377.6 679.1 373.6C681.3 369.6 681.3 364.9 681.0 360.6C680.7 356.3 677.9 349.9 677.3 347.7C673.6 345.8 658.7 337.9 655.0 336.0C641.9 338.6 589.6 348.9 576.5 351.5Z" fill="url(#gw2)" stroke="#000" stroke-width="2.600"/>
<path d="M599.5 264.0C600.5 261.9 603.2 256.3 605.8 251.3C608.4 246.3 611.6 240.0 615.3 233.9C619.0 227.8 623.5 221.0 628.0 214.9C632.5 208.8 637.2 202.8 642.2 197.5C647.2 192.2 652.5 187.4 658.0 183.2C663.5 179.0 669.7 175.2 675.5 172.2C681.3 169.2 687.6 166.7 692.9 165.0C698.2 163.3 701.8 162.8 707.1 161.9C712.5 161.0 718.4 159.9 725.0 159.3C731.6 158.7 737.6 158.2 746.8 158.3C756.0 158.4 769.9 158.3 780.0 160.0C790.1 161.7 798.2 164.6 807.3 168.3C816.4 172.0 825.5 176.8 834.6 182.0C843.7 187.2 853.8 193.4 862.0 199.7C870.2 206.0 877.5 212.9 883.8 220.0C890.1 227.1 895.5 234.2 900.0 242.0C904.5 249.8 908.2 257.9 911.0 266.6C913.8 275.3 915.0 284.3 916.6 294.0C918.2 303.7 919.6 314.8 920.7 325.0C921.8 335.2 922.0 346.3 923.4 355.5C924.8 364.7 925.6 370.9 929.0 380.0C932.4 389.1 939.2 400.9 944.0 410.0C948.8 419.1 953.5 426.6 957.6 434.8C961.7 443.0 965.9 450.8 968.5 459.0C971.1 467.2 972.2 476.3 973.4 484.0C974.5 491.7 975.3 496.9 975.4 505.0C975.5 513.1 974.9 524.1 974.0 532.8C973.1 541.5 971.8 551.9 970.0 557.4C968.2 562.9 966.0 564.5 963.0 565.6C960.0 566.7 955.4 565.1 952.0 564.0C948.6 562.9 944.2 559.6 942.6 558.7C942.7 563.9 942.9 581.1 943.0 590.0C943.1 598.9 942.4 606.7 943.0 612.0C943.6 617.3 942.0 618.4 946.7 621.6C951.4 624.8 963.3 628.0 971.0 631.0C978.7 634.0 987.0 636.8 993.0 639.3C999.0 641.8 1004.5 644.9 1006.8 646.0C1006.5 646.8 1007.3 649.9 1005.0 650.8C1002.7 651.7 1000.9 651.0 993.0 651.6C985.1 652.2 970.3 653.2 957.6 654.4C944.9 655.5 930.3 656.9 916.6 658.5C902.9 660.1 889.3 662.4 875.6 664.0C861.9 665.6 850.5 666.9 834.6 668.0C818.7 669.1 794.8 670.3 780.0 670.8C765.2 671.3 760.2 671.3 746.0 670.8C731.8 670.3 703.5 668.5 695.0 668.0C698.9 662.8 711.9 647.3 718.6 636.6C725.3 625.9 731.9 617.7 735.0 604.0C738.1 590.3 737.5 569.2 737.0 554.6C736.5 540.0 734.8 528.5 732.0 516.4C729.2 504.3 725.9 493.3 720.0 482.0C714.1 470.7 702.7 456.5 696.7 448.5C690.7 440.5 687.5 438.0 684.0 434.0C680.5 430.0 678.7 427.4 675.4 424.4C672.1 421.4 667.2 418.9 664.3 416.0C661.4 413.1 658.8 409.9 657.9 406.8C657.0 403.7 657.1 401.3 658.8 397.6C660.5 393.9 664.6 388.6 668.0 384.6C671.4 380.6 676.9 377.6 679.1 373.6C681.3 369.6 681.3 364.9 681.0 360.6C680.7 356.3 677.9 349.9 677.3 347.7C664.3 333.8 612.5 277.9 599.5 264.0Z" fill="url(#gb)" stroke="#000" stroke-width="2.900"/>
<path d="M818.3 413.0C809.6 422.4 824.2 420.7 827.8 426.6C831.4 432.5 834.3 441.6 840.0 448.4C845.7 455.2 854.7 461.1 862.0 467.5C869.3 473.9 877.0 479.9 883.8 486.7C890.6 493.5 897.5 501.7 903.0 508.5C908.5 515.3 911.6 520.5 916.6 527.3C921.6 534.0 928.7 543.8 933.0 549.0C937.3 554.2 939.4 556.2 942.6 558.7C945.8 561.2 948.6 562.9 952.0 564.0C955.4 565.1 960.0 566.7 963.0 565.6C966.0 564.5 968.2 562.9 970.0 557.4C971.8 551.9 973.1 541.5 974.0 532.8C974.9 524.1 975.5 513.1 975.4 505.0C975.3 496.9 974.5 491.7 973.4 484.0C972.2 476.3 971.1 467.2 968.5 459.0C965.9 450.8 961.7 443.0 957.6 434.8C953.5 426.6 948.8 419.1 944.0 410.0C939.2 400.9 932.4 389.1 929.0 380.0C925.6 370.9 931.6 357.2 923.4 355.5C915.2 353.8 897.5 360.4 880.0 370.0C862.5 379.6 827.0 403.6 818.3 413.0Z" fill="url(#gwg)"/>
<path d="M818.3 413.0C819.9 415.3 824.2 420.7 827.8 426.6C831.4 432.5 834.3 441.6 840.0 448.4C845.7 455.2 854.7 461.1 862.0 467.5C869.3 473.9 877.0 479.9 883.8 486.7C890.6 493.5 897.5 501.7 903.0 508.5C908.5 515.3 911.6 520.5 916.6 527.3C921.6 534.0 928.7 543.8 933.0 549.0C937.3 554.2 941.0 557.1 942.6 558.7" fill="none" stroke="#000" stroke-width="2.400"/>
<path d="M400.5 458.7C401.6 462.1 403.1 469.6 407.0 479.0C410.9 488.4 416.9 502.5 423.7 514.8C430.5 527.1 439.8 539.8 448.0 553.0C456.2 566.2 465.7 581.1 473.0 593.8C480.3 606.5 487.5 619.5 492.0 629.0C496.5 638.5 498.7 647.3 500.0 651.0C502.3 652.2 508.5 658.2 514.0 658.0C519.5 657.8 526.4 653.2 533.0 649.8C539.6 646.4 550.1 639.5 553.5 637.5C549.2 632.5 535.0 616.0 527.5 607.4C520.0 598.8 513.0 592.4 508.4 585.6C503.8 578.8 503.2 572.3 500.0 566.4C496.8 560.5 495.8 557.7 489.0 550.0C482.2 542.3 467.8 530.0 459.0 520.0C450.2 510.0 443.2 499.1 436.0 490.0C428.8 480.9 421.4 470.8 415.5 465.6C409.6 460.4 403.0 459.9 400.5 458.7Z" fill="url(#gf)" stroke="#000" stroke-width="2.800"/>
<path d="M636.8 613.0C639.1 615.7 647.8 623.4 650.5 629.3C653.2 635.2 653.5 642.5 653.0 648.4C652.5 654.3 650.0 660.7 647.8 664.8C645.6 668.9 641.0 671.6 639.6 673.0C640.2 669.2 642.8 657.2 643.0 650.0C643.2 642.8 642.0 636.2 641.0 630.0C640.0 623.8 637.5 615.8 636.8 613.0Z" fill="#8e8e90" stroke="#000" stroke-width="2.400"/>
<path d="M571.0 497.0C568.6 501.0 567.8 507.6 568.5 514.8C569.2 522.0 572.8 531.1 575.0 540.0C577.2 548.9 579.0 556.8 582.0 568.0C585.0 579.2 588.4 593.1 593.0 607.4C597.6 621.7 604.5 642.7 609.5 653.9C614.5 665.1 619.4 670.3 623.0 674.4C626.6 678.5 628.6 678.7 631.4 678.5C634.2 678.3 637.2 676.9 639.6 673.0C642.0 669.1 645.1 662.2 646.0 655.0C646.9 647.8 646.1 636.6 645.0 630.0C643.9 623.4 641.9 624.5 639.6 615.6C637.3 606.7 634.7 588.9 631.0 576.5C627.3 564.1 622.0 551.3 617.5 541.0C613.0 530.7 607.6 522.1 604.0 514.8C600.4 507.5 599.5 501.0 596.0 497.0C592.5 493.0 587.2 491.0 583.0 491.0C578.8 491.0 573.4 493.0 571.0 497.0Z" fill="url(#gf2)" stroke="#000" stroke-width="2.800"/>
<path d="M554.6 333.8C556.3 335.2 561.4 339.3 565.0 342.0C568.6 344.7 570.5 347.1 576.5 350.0C582.5 352.9 591.9 358.8 601.0 359.7C610.1 360.6 621.4 357.2 631.0 355.6C640.6 354.0 652.2 352.0 658.5 350.0C664.8 348.0 666.8 344.6 668.5 343.5C663.2 343.1 646.5 341.5 636.6 341.0C626.7 340.5 616.8 341.4 609.0 340.6C601.2 339.9 596.3 337.9 590.0 336.5C583.7 335.1 576.9 332.8 571.0 332.4C565.1 331.9 557.3 333.6 554.6 333.8Z" fill="url(#gk2)" stroke="#000" stroke-width="2.800"/>
<path d="M534.2 313.3C535.5 309.6 543.8 308.0 549.0 305.0C554.2 302.0 558.8 299.6 565.6 295.5C572.4 291.4 582.8 282.8 590.0 280.5C597.2 278.2 601.2 279.4 609.0 281.9C616.8 284.4 626.5 290.1 636.6 295.5C646.7 300.9 659.4 308.9 669.4 314.6C679.4 320.3 690.1 325.4 696.7 329.7C703.3 334.0 707.6 337.4 709.0 340.6C710.4 343.8 708.0 347.7 705.0 348.8C702.0 349.9 697.8 348.5 691.0 347.4C684.2 346.3 673.1 342.9 664.0 342.0C654.9 341.1 645.8 342.2 636.6 342.0C627.4 341.8 616.8 341.5 609.0 340.6C601.2 339.7 596.3 337.9 590.0 336.5C583.7 335.1 576.9 332.8 571.0 332.4C565.1 331.9 559.6 334.7 554.6 333.8C549.6 332.9 544.4 330.4 541.0 327.0C537.6 323.6 532.9 317.0 534.2 313.3Z" fill="url(#gk)" stroke="#000" stroke-width="3.200"/>
<ellipse cx="686" cy="259.300" rx="4.600" ry="14.800" transform="rotate(17 686 259.300)" fill="#000"/>
<path d="M566.5 243.9C567.2 238.7 568.8 235.4 571.8 229.2C574.8 223.0 579.4 213.7 584.3 206.5C589.2 199.3 594.7 192.1 601.0 186.0C607.3 179.9 614.3 174.9 622.0 170.0C629.7 165.1 637.9 160.4 647.0 156.8C656.1 153.2 668.3 149.8 676.6 148.2C684.9 146.6 691.7 146.1 697.0 147.2C702.3 148.2 705.9 151.4 708.3 154.5C710.7 157.6 711.9 161.6 711.6 165.5C711.3 169.4 709.0 173.9 706.5 178.0C704.0 182.1 700.2 185.8 696.5 190.0C692.8 194.2 688.5 198.8 684.0 203.5C679.5 208.2 674.3 213.7 669.2 218.5C664.1 223.3 658.6 228.2 653.3 232.6C648.0 237.0 644.1 240.4 637.5 245.0C630.9 249.6 621.1 255.7 613.5 260.0C605.9 264.3 597.9 269.2 592.0 271.0C586.1 272.8 582.0 272.6 578.0 270.8C574.0 269.0 569.7 264.8 567.8 260.3C565.9 255.8 565.8 249.1 566.5 243.9Z" fill="none" stroke="#000" stroke-width="7.400"/>
<path d="M566.5 243.9C567.2 238.7 568.8 235.4 571.8 229.2C574.8 223.0 579.4 213.7 584.3 206.5C589.2 199.3 594.7 192.1 601.0 186.0C607.3 179.9 614.3 174.9 622.0 170.0C629.7 165.1 637.9 160.4 647.0 156.8C656.1 153.2 668.3 149.8 676.6 148.2C684.9 146.6 691.7 146.1 697.0 147.2C702.3 148.2 705.9 151.4 708.3 154.5C710.7 157.6 711.9 161.6 711.6 165.5C711.3 169.4 709.0 173.9 706.5 178.0C704.0 182.1 700.2 185.8 696.5 190.0C692.8 194.2 688.5 198.8 684.0 203.5C679.5 208.2 674.3 213.7 669.2 218.5C664.1 223.3 658.6 228.2 653.3 232.6C648.0 237.0 644.1 240.4 637.5 245.0C630.9 249.6 621.1 255.7 613.5 260.0C605.9 264.3 597.9 269.2 592.0 271.0C586.1 272.8 582.0 272.6 578.0 270.8C574.0 269.0 569.7 264.8 567.8 260.3C565.9 255.8 565.8 249.1 566.5 243.9Z" fill="none" stroke="#fb0018" stroke-width="5.400"/>
<path d="M369.0 360.4C371.1 356.0 376.1 342.6 381.7 334.0C387.3 325.4 395.1 315.7 402.8 308.7C410.5 301.7 419.9 295.9 428.0 291.8C436.1 287.8 444.7 285.3 451.4 284.4C458.1 283.5 464.0 283.9 468.2 286.5C472.4 289.1 476.3 294.9 476.7 300.0C477.1 305.1 473.9 312.2 470.4 317.0C466.9 321.8 461.2 326.2 455.6 328.7C450.0 331.2 441.4 332.9 436.6 332.0C431.8 331.1 427.7 327.4 427.0 323.5C426.3 319.6 429.0 314.0 432.3 308.7C435.6 303.4 441.0 296.8 447.0 291.8C453.0 286.9 459.7 283.4 468.2 279.0C476.7 274.6 488.7 268.7 497.8 265.4C506.9 262.1 515.8 260.4 523.0 259.0C530.2 257.6 538.0 257.3 541.0 257.0" fill="none" stroke="#000" stroke-width="9.4"/>
<path d="M510.0 251.7C512.8 252.1 521.6 253.0 527.0 254.0C532.4 255.0 539.9 256.9 542.5 257.5C540.9 259.9 535.7 267.5 533.0 272.0C530.3 276.5 527.4 282.3 526.3 284.4" fill="none" stroke="#000" stroke-width="9.4"/>
<path d="M369.0 360.4C371.1 356.0 376.1 342.6 381.7 334.0C387.3 325.4 395.1 315.7 402.8 308.7C410.5 301.7 419.9 295.9 428.0 291.8C436.1 287.8 444.7 285.3 451.4 284.4C458.1 283.5 464.0 283.9 468.2 286.5C472.4 289.1 476.3 294.9 476.7 300.0C477.1 305.1 473.9 312.2 470.4 317.0C466.9 321.8 461.2 326.2 455.6 328.7C450.0 331.2 441.4 332.9 436.6 332.0C431.8 331.1 427.7 327.4 427.0 323.5C426.3 319.6 429.0 314.0 432.3 308.7C435.6 303.4 441.0 296.8 447.0 291.8C453.0 286.9 459.7 283.4 468.2 279.0C476.7 274.6 488.7 268.7 497.8 265.4C506.9 262.1 515.8 260.4 523.0 259.0C530.2 257.6 538.0 257.3 541.0 257.0" fill="none" stroke="#fb0018" stroke-width="7.4"/>
<path d="M510.0 251.7C512.8 252.1 521.6 253.0 527.0 254.0C532.4 255.0 539.9 256.9 542.5 257.5C540.9 259.9 535.7 267.5 533.0 272.0C530.3 276.5 527.4 282.3 526.3 284.4" fill="none" stroke="#fb0018" stroke-width="7.4"/>
<g font-family="'Liberation Sans','Noto Sans CJK JP',sans-serif" font-size="44.500" font-weight="400" fill="#fff" stroke="#fff" stroke-width="6.400" stroke-linejoin="round" letter-spacing="-1.100">
<text x="315" y="467">ハイライトを入れたい部分</text>
<text x="315" y="509.500">周辺の色をスポイトでとる。</text>
</g>
<g font-family="'Liberation Sans','Noto Sans CJK JP',sans-serif" font-size="44.500" font-weight="400" fill="#000" stroke="#000" stroke-width=".5" stroke-linejoin="round" letter-spacing="-1.100">
<text x="315" y="467">ハイライトを入れたい部分</text>
<text x="315" y="509.500">周辺の色をスポイトでとる。</text>
</g>
</g>
</svg>
<div style="left:1096px;top:90px;width:2px;height:640px;background:#222"></div>
<div style="left:1096px;top:104px;width:2px;height:612px;background:linear-gradient(#5a5a5a,#4a4a4a)"></div>
<div style="left:252px;top:730px;width:846px;height:20px;background:linear-gradient(#454545,#303030);border-top:1px solid #3a3a3a"></div>
<div style="left:263.500px;top:731px;width:836px;height:18px;border-radius:7px 0 0 7px;background:linear-gradient(#484848,#343434 45%,#272727);border:1px solid #242424;border-right:none"></div>
<svg style="left:253px;top:731px" width="12" height="18" viewBox="0 0 12 18"><path d="M2.500 9l7-4.300v8.600z" fill="#b0b0b0"/></svg>
<div style="left:576px;top:731px;width:211px;height:18px;border-radius:4px;background:linear-gradient(#767674,#646464)"></div>
<div style="left:0;top:750px;width:1098px;height:8px;background:#222;border-top:1px solid #4c4c4c;overflow:hidden"><div class="t" style="left:6px;top:3.500px;font-size:12px;color:#d4d4d4">546</div><div class="t" style="left:28px;top:3.500px;font-size:12px;color:#d4d4d4">*</div><div class="t" style="left:39px;top:3.500px;font-size:12px;color:#d4d4d4">390</div><div class="t" style="left:63px;top:3.500px;font-size:12px;color:#d4d4d4">pixel</div><div class="t" style="left:95px;top:3.500px;font-size:12px;color:#d4d4d4">(4</div><div class="t" style="left:109px;top:3.500px;font-size:12px;color:#d4d4d4">*</div><div class="t" style="left:120px;top:3.500px;font-size:12px;color:#d4d4d4">2.8cm</div><div class="t" style="left:147px;top:3.500px;font-size:12px;color:#d4d4d4">)</div><div class="t" style="left:166px;top:3.500px;font-size:12px;color:#d4d4d4">350</div><div class="t" style="left:190px;top:3.500px;font-size:12px;color:#d4d4d4">dpi</div><div class="t" style="left:216px;top:3.500px;font-size:12px;color:#d4d4d4">150</div><div class="t" style="left:238px;top:3.500px;font-size:12px;color:#d4d4d4">%</div><div class="t" style="left:253px;top:3.500px;font-size:12px;color:#d4d4d4">(</div><div class="t" style="left:261px;top:3.500px;font-size:12px;color:#d4d4d4">298,</div><div class="t" style="left:289px;top:3.500px;font-size:12px;color:#d4d4d4">100</div><div class="t" style="left:308px;top:3.500px;font-size:12px;color:#d4d4d4">)</div></div>
<!-- eyedropper button + red highlight frame -->
<div class="tool" style="left:5px;top:610px;width:26px;height:25px;background:#3c3c3c;border-color:#4c4c4c"><svg style="left:-1px;top:-2px" width="27" height="27" viewBox="0 0 27 27"><path d="M6.200 21.800l1.300-4 8.500-8.800 2.600 2.600-8.600 8.700z" fill="none" stroke="#e4e4e4" stroke-width="1.500" stroke-linejoin="round"/><path d="M14.300 7.800l1.800-1.700 1.300 1.200 1.600-2.300c1.300-1.500 3.800.6 2.600 2.400l-2.100 1.900 1.300 1.300-1.800 1.800z" fill="#e4e4e4"/></svg></div>
<svg style="left:0;top:590px" width="60" height="64" viewBox="0 590 60 64"><path d="M-14 599.500h58.500a5.500 5.500 0 0 1 5.500 5.500v34.500a5.500 5.500 0 0 1-5.500 5.500h-58.500zM6 610.500v23.500h33.500v-23.500z" fill="#fb0010" fill-rule="evenodd" stroke="#000" stroke-width="1.400"/></svg>
</div></body></html>
